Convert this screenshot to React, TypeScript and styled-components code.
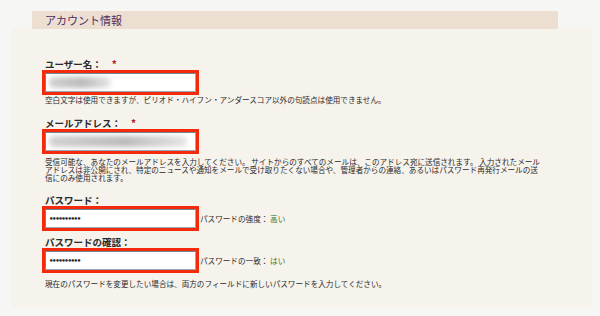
import styled, { createGlobalStyle } from "styled-components";

const GlobalStyle = createGlobalStyle`
  html, body {
    margin: 0;
    padding: 0;
    background: #f6f6f5;
  }
  body {
    font-family: "Noto Sans CJK JP", "Noto Sans", sans-serif;
    color: #333;
  }
`;

const Page = styled.div`
  width: 600px;
  height: 316px;
  padding: 11px 0 0 11px;
  box-sizing: border-box;
`;

const Header = styled.div`
  position: relative;
  z-index: 1;
  margin: 0 0 -2px 21px;
  width: 526px;
  height: 18px;
  background: #ecdfd2;
  display: flex;
  align-items: center;
  padding-left: 13px;
  box-sizing: border-box;
  color: #4e2c61;
  font-size: 11px;
  line-height: 18px;
`;

const Panel = styled.div`
  width: 581px;
  height: 280px;
  background: #f6f2ec;
  padding: 31px 0 0 34px;
  box-sizing: border-box;
`;

const Field = styled.div<{ $top: number }>`
  margin-top: ${(p) => p.$top}px;
`;

const Label = styled.div`
  display: flex;
  align-items: center;
  gap: 10px;
  font-size: 9.5px;
  font-weight: 700;
  line-height: 12px;
  color: #2a2a2a;
`;

const Required = styled.span`
  color: #b3191b;
  font-size: 10px;
`;

const Row = styled.div`
  display: flex;
  align-items: center;
  margin-top: 3px;
`;

const InputBox = styled.div`
  width: 151px;
  height: 19px;
  box-sizing: border-box;
  background: #fff;
  border: 1px solid #9aaab2;
  border-top-color: #6f8793;
  border-left-color: #6f8793;
  outline: 3px solid #f42a0c;
  display: flex;
  align-items: center;
  padding-left: 3px;
  overflow: hidden;
`;

const Blur = styled.div<{ $w: number }>`
  width: ${(p) => p.$w}px;
  height: 11px;
  border-radius: 5px;
  background: linear-gradient(
    90deg,
    rgba(190, 190, 190, 0.7),
    rgba(175, 175, 175, 0.85) 55%,
    rgba(205, 205, 205, 0.5)
  );
  filter: blur(2.5px);
`;

const Dots = styled.span`
  font-size: 7px;
  font-weight: 700;
  letter-spacing: -1.4px;
  color: #222;
  font-family: "DejaVu Sans", sans-serif;
`;

const Status = styled.span`
  margin-left: 4px;
  font-size: 7.6px;
  color: #2a2a2a;
`;

const Good = styled.span`
  color: #2f7f2f;
`;

const Help = styled.p<{ $top: number }>`
  margin: ${(p) => p.$top}px 0 0 0;
  width: 495px;
  font-size: 7.6px;
  line-height: 8px;
  color: #2a2a2a;
`;

export default function App() {
  return (
    <>
      <GlobalStyle />
      <Page>
        <Header>アカウント情報</Header>
        <Panel>
          <Field $top={0}>
            <Label>
              ユーザー名：<Required>*</Required>
            </Label>
            <Row>
              <InputBox>
                <Blur $w={62} />
              </InputBox>
            </Row>
            <Help $top={4}>
              空白文字は使用できますが、ピリオド・ハイフン・アンダースコア以外の句読点は使用できません。
            </Help>
          </Field>
          <Field $top={13}>
            <Label>
              メールアドレス：<Required>*</Required>
            </Label>
            <Row>
              <InputBox>
                <Blur $w={138} />
              </InputBox>
            </Row>
            <Help $top={7}>
              受信可能な、あなたのメールアドレスを入力してください。 サイトからのすべてのメールは、このアドレス宛に送信されます。 入力されたメールアドレスは非公開にされ、特定のニュースや通知をメールで受け取りたくない場合や、管理者からの連絡、あるいはパスワード再発行メールの送信にのみ使用されます。
            </Help>
          </Field>
          <Field $top={12}>
            <Label>パスワード：</Label>
            <Row>
              <InputBox>
                <Dots>••••••••••</Dots>
              </InputBox>
              <Status>
                パスワードの強度： <Good>高い</Good>
              </Status>
            </Row>
          </Field>
          <Field $top={8}>
            <Label>パスワードの確認：</Label>
            <Row>
              <InputBox>
                <Dots>••••••••••</Dots>
              </InputBox>
              <Status>
                パスワードの一致： <Good>はい</Good>
              </Status>
            </Row>
            <Help $top={10}>
              現在のパスワードを変更したい場合は、両方のフィールドに新しいパスワードを入力してください。
            </Help>
          </Field>
        </Panel>
      </Page>
    </>
  );
}
